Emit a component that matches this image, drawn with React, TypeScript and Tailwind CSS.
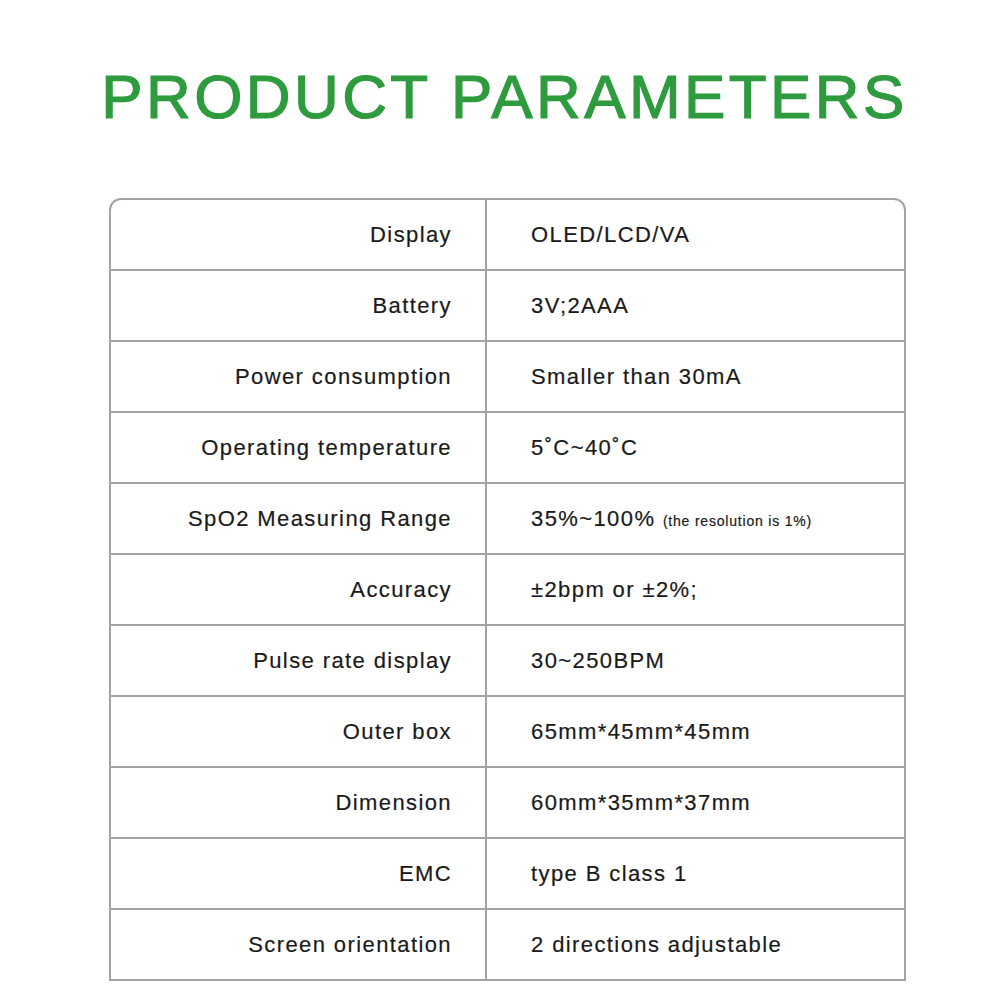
const rows: [string, React.ReactNode][] = [
  ['Display', 'OLED/LCD/VA'],
  ['Battery', '3V;2AAA'],
  ['Power consumption', 'Smaller than 30mA'],
  ['Operating temperature', '5˚C~40˚C'],
  [
    'SpO2 Measuring Range',
    <>
      35%~100% <span className="text-[14px] tracking-[0.8px]">(the resolution is 1%)</span>
    </>,
  ],
  ['Accuracy', '±2bpm or ±2%;'],
  ['Pulse rate display', '30~250BPM'],
  ['Outer box', '65mm*45mm*45mm'],
  ['Dimension', '60mm*35mm*37mm'],
  ['EMC', 'type B class 1'],
  ['Screen orientation', '2 directions adjustable'],
];

export default function App() {
  return (
    <div
      className="flex h-[1001px] w-[1001px] flex-col items-center bg-white"
      style={{ fontFamily: '"Liberation Sans", Arial, sans-serif' }}
    >
      <h1 className="mt-[57px] ml-[8px] text-[62px] leading-[80px] font-normal tracking-[3.4px] text-[#2e9b3e] [-webkit-text-stroke:1.2px_#2e9b3e]">
        PRODUCT PARAMETERS
      </h1>

      <div className="mt-[61px] ml-[14px] w-[797px] rounded-t-[12px] border-2 border-[#a3a3a3]">
        {rows.map(([label, value], i) => (
          <div
            key={label}
            className={`flex text-[22px] tracking-[1.4px] text-[#1a1a1a] [-webkit-text-stroke:0.2px_#1a1a1a] ${i > 0 ? 'h-[71px] border-t-2 border-[#a3a3a3]' : 'h-[69px]'}`}
          >
            <div className="flex w-[376px] items-center justify-end border-r-2 border-[#a3a3a3] pr-[33px]">
              {label}
            </div>
            <div className="flex flex-1 items-center pl-[44px]">
              <span>{value}</span>
            </div>
          </div>
        ))}
      </div>
    </div>
  );
}
